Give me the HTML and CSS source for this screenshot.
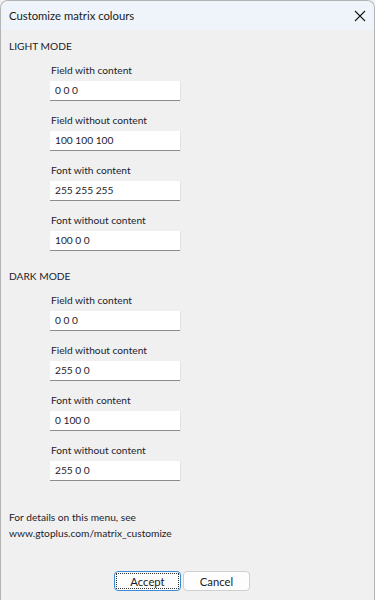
FILE: index.html
```html
<!DOCTYPE html>
<html>
<head>
<meta charset="utf-8">
<link rel="stylesheet" href="styles.css">
</head>
<body>
<div class="window">
  <div class="title-bar">
    <span class="title">Customize matrix colours</span>
    <svg class="close" width="12" height="12" viewBox="0 0 12 12"><path d="M1 1 L11 11 M11 1 L1 11" stroke="#1a1a1a" stroke-width="1.1" fill="none"/></svg>
  </div>
  <div class="content">
    <div class="section-title">LIGHT MODE</div>
    <div class="fields">
      <div class="field"><div class="label">Field with content</div><div class="input">0 0 0</div></div>
      <div class="field"><div class="label">Field without content</div><div class="input">100 100 100</div></div>
      <div class="field"><div class="label">Font with content</div><div class="input">255 255 255</div></div>
      <div class="field"><div class="label">Font without content</div><div class="input">100 0 0</div></div>
    </div>
    <div class="section-title dark">DARK MODE</div>
    <div class="fields">
      <div class="field"><div class="label">Field with content</div><div class="input">0 0 0</div></div>
      <div class="field"><div class="label">Field without content</div><div class="input">255 0 0</div></div>
      <div class="field"><div class="label">Font with content</div><div class="input">0 100 0</div></div>
      <div class="field"><div class="label">Font without content</div><div class="input">255 0 0</div></div>
    </div>
    <div class="details">
      <div>For details on this menu, see</div>
      <div>www.gtoplus.com/matrix_customize</div>
    </div>
    <div class="buttons">
      <div class="btn primary"><span class="focus">Accept</span></div>
      <div class="btn">Cancel</div>
    </div>
  </div>
</div>
</body>
</html>
```
FILE: styles.css
```css
html, body {
  margin: 0;
  padding: 0;
  background: #f0f0f0;
}
body {
  font-family: Lato, "Noto Sans", sans-serif;
  font-size: 10.2px;
  color: #1c1c2c;
}
.window {
  box-sizing: border-box;
  width: 375px;
  height: 600px;
  border: 1px solid #b4b4b4;
  border-bottom: none;
  border-radius: 8px 8px 0 0;
  background: #f0f0f0;
  overflow: hidden;
}
.title-bar {
  height: 29px;
  background: #eef4f9;
  display: flex;
  align-items: center;
  justify-content: space-between;
  padding: 0 7px 0 8px;
}
.title {
  font-size: 11.3px;
  color: #1a1a1a;
}
.close {
  margin-right: 1px;
}
.content {
  padding: 8px 8px 0 8px;
}
.section-title {
  line-height: 16px;
  margin-bottom: 7px;
}
.section-title.dark {
  margin-top: 17px;
}
.fields {
  padding-left: 41px;
  display: flex;
  flex-direction: column;
  gap: 10px;
}
.field {
  display: flex;
  flex-direction: column;
}
.label {
  line-height: 18px;
  padding-left: 1px;
  margin-bottom: 2px;
}
.input {
  box-sizing: border-box;
  width: 130px;
  height: 20px;
  background: #ffffff;
  border-bottom: 1px solid #8c8c8c;
  box-shadow: 1px 0 0 #e2e2e2;
  padding-left: 5px;
  line-height: 19px;
}
.details {
  margin-top: 28px;
  line-height: 16px;
}
.buttons {
  margin-top: 30px;
  padding-left: 105px;
  display: flex;
  gap: 2px;
}
.btn {
  box-sizing: border-box;
  width: 67px;
  height: 20px;
  background: #fdfdfd;
  border: 1px solid #d0d0d0;
  border-radius: 4px;
  display: flex;
  align-items: center;
  justify-content: center;
  font-size: 11.3px;
  color: #1a1a1a;
}
.btn.primary {
  border: 1px solid #3c8ad6;
  padding: 1px;
}
.focus {
  box-sizing: border-box;
  width: 100%;
  height: 100%;
  border: 1px dotted #333;
  display: flex;
  align-items: center;
  justify-content: center;
}
```
